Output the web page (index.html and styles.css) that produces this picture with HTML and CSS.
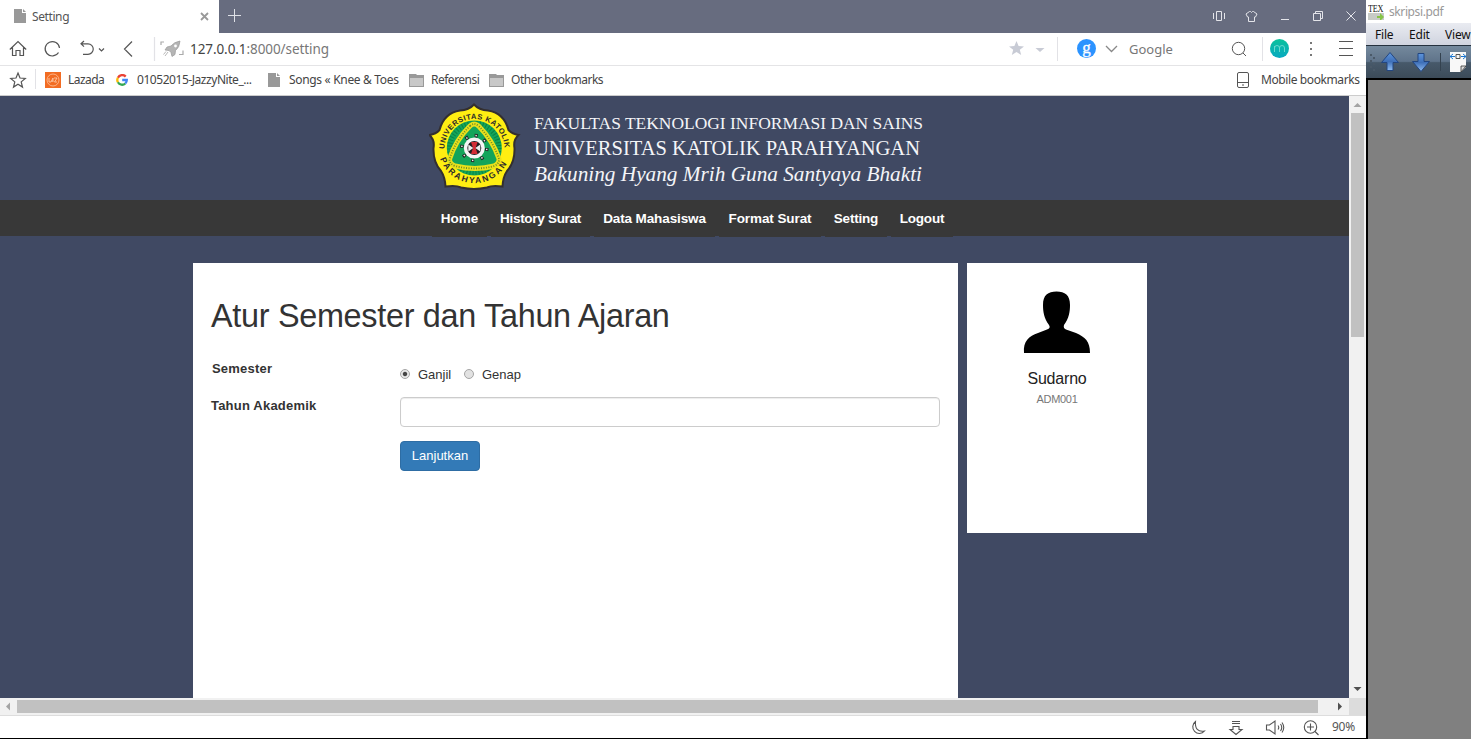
FILE: index.html
```html
<!DOCTYPE html>
<html lang="id">
<head>
<meta charset="utf-8">
<title>Setting</title>
<link rel="stylesheet" href="styles.css">
</head>
<body>
<div class="desktop">
<div class="browser">
  <div class="tabbar">
    <div class="tab">
      <svg class="tab-file" width="12" height="14"><path d="M0 0h8v4h4v10H0z" fill="#999"/><path d="M9 0l3 3H9z" fill="#999"/></svg>
      <span class="tab-title">Setting</span>
      <svg class="tab-close" width="9" height="9"><path d="M1 1l7 7M8 1l-7 7" stroke="#999" stroke-width="1.8"/></svg>
    </div>
    <svg class="plus" width="13" height="13"><path d="M6.5 0v13M0 6.5h13" stroke="#dfe1e7"/></svg>
    <svg class="winicons" width="146" height="16" fill="none" stroke="#e4e5ea">
      <path d="M.5 5v6M11.500 5v6M3.500 3.500h5v9h-5z"/>
      <path d="M36.500 3.500l-3.500 2.500 1.500 3h1v4.500h6v-4.500h1l1.500-3-3.500-2.500h-1q-1 2-2 0z"/>
      <path d="M68 11.500h8"/>
      <path d="M100.500 5.500h7v7h-7zM102.500 5.500v-2h7v7h-2"/>
      <path d="M133.500 3.500l9 9M142.500 3.500l-9 9"/>
    </svg>
  </div>
  <div class="addressbar">
    <svg class="nav-icons" width="186" height="32" fill="none" stroke="#555" stroke-width="1.200">
      <path d="M9.800 16.500l8.200-8 8.200 8M12.500 14.500v8h3.500v-5h4v5h3.500v-8"/>
      <path d="M58.500 19.500a7.200 7.200 0 1 1 1-4.500"/>
      <path d="M84 8l-3 2.800 3 2.800M81 10.800h7a5 5 0 0 1 0 10.500h-5M99 15.500l2.500 2.500 2.500-2.500M132 8.500l-7.500 7.500 7.500 7.500"/>
      <path d="M154.500 4v24" stroke="#e2e2e6"/>
      <path d="M161 12v-3h3M179 21.500h4v-4" stroke="#aaa"/>
      <path d="M180 8q-6 1-9 5l-4 1-2 3 4 .5 2 2 1 4 3-2 .5-4q4-3 4.500-9.500zM168 19l-3 4M166 18.500l-2.500 3" fill="#b5b5b5" stroke="#999" stroke-width=".7"/>
      <circle cx="175.500" cy="13" r="1.400" fill="#fff" stroke="none"/>
    </svg>
    <span class="url"><b>127.0.0.1</b>:8000/setting</span>
    <svg class="search-left" width="120" height="32">
      <path d="M16.500 8l2.100 5 5.400.4-4.200 3.400 1.400 5.200-4.700-2.900-4.700 2.900 1.400-5.200-4.200-3.400 5.400-.4z" fill="#c8cbd5"/>
      <path d="M35.500 15h9l-4.500 4z" fill="#c8cbd5"/><path d="M57.500 4v24" stroke="#e2e2e6"/>
      <circle cx="86.500" cy="15.500" r="9.500" fill="#2b93ff"/>
      <text x="86.500" y="19.500" text-anchor="middle" fill="#fff" font-family="Liberation Serif, serif" font-size="17" stroke="#fff" stroke-width=".3">g</text>
      <path d="M106 13l5.500 5.500 5.500-5.500" fill="none" stroke="#888" stroke-width="1.300"/>
    </svg>
    <span class="engine">Google</span>
    <svg class="search-right" width="136" height="32" fill="none" stroke="#555">
      <circle cx="8.500" cy="15.500" r="6.200"/><path d="M13 20l3 3"/>
      <path d="M32.500 4v24" stroke="#e2e2e6"/>
      <circle cx="49.500" cy="15.500" r="9.500" fill="url(#mg)" stroke="none"/>
      <defs><linearGradient id="mg" x2="0" y2="1"><stop stop-color="#0ac19b"/><stop offset="1" stop-color="#08a9c1"/></linearGradient></defs>
      <path d="M44.500 19v-6M44.500 15q0-2.500 2.500-2.500t2.500 2.500v4M49.500 15q0-2.500 2.500-2.500t2.500 2.500v4" stroke="#68d9ce"/>
      <path d="M80 9h2v2h-2zM80 15h2v2h-2zM80 21h2v2h-2z" fill="#777" stroke="none"/>
      <path d="M109 8.500h14M109 15.500h14M109 22.500h14"/>
    </svg>
  </div>
  <div class="bookmarks">
    <svg class="bm-star" width="38" height="30"><path d="M18 8l2 5 5.300.4-4.100 3.500 1.300 5.200-4.500-2.800-4.500 2.800 1.300-5.200-4.100-3.500 5.300-.4z" fill="none" stroke="#555" stroke-width="1.200"/><path d="M35.500 4v20" stroke="#e2e2e6"/></svg>
    <svg class="ic-lazada" width="16" height="16"><path d="M0 0h16v16H0z" fill="#f26c23"/><circle cx="8" cy="8" r="6" fill="none" stroke="#ffc49d" stroke-width=".8"/><path d="M4 6v4h2l2-4v4M6.500 9H8M9 6h3L9.500 10H12" fill="none" stroke="#ffd3b5" stroke-width=".8"/></svg>
    <span class="bm w-lazada">Lazada</span>
    <svg class="ic-google" width="12" height="12" viewBox="0 0 12 12" fill="none" stroke-width="2.300"><path d="M9.700 2.600A4.800 4.800 0 0 0 1.900 3.700" stroke="#ea4335"/><path d="M1.900 3.700a4.800 4.800 0 0 0 0 4.600" stroke="#fbbc05"/><path d="M1.900 8.300a4.800 4.800 0 0 0 7.400 1.200" stroke="#34a853"/><path d="M9.300 9.500Q10.800 8 10.800 6H6.200" stroke="#4285f4"/></svg>
    <span class="bm w-jazzy">01052015-JazzyNite_...</span>
    <svg class="ic-file" width="12" height="14"><path d="M0 0h8v4h4v10H0z" fill="#999"/><path d="M9 0l3 3H9z" fill="#999"/></svg>
    <span class="bm w-songs">Songs « Knee &amp; Toes</span>
    <svg class="ic-folder" width="15" height="13"><path d="M0 0h7l1 1h7v12H0z" fill="#999"/><path d="M1 4h13v8H1z" fill="#c8c8c8"/></svg>
    <span class="bm w-ref">Referensi</span>
    <svg class="ic-folder" width="15" height="13"><path d="M0 0h7l1 1h7v12H0z" fill="#999"/><path d="M1 4h13v8H1z" fill="#c8c8c8"/></svg>
    <span class="bm w-other">Other bookmarks</span>
    <svg class="ic-phone" width="12" height="16" fill="none" stroke="#555"><rect x=".5" y=".5" width="11" height="15" rx="1.500"/><path d="M.5 10.500h11M5 13h2"/></svg>
    <span class="bm w-mobile">Mobile bookmarks</span>
  </div>
  <div class="viewport">
    <div class="page">
      <header class="banner">
        <svg width="500" height="104" viewBox="429 96 500 104">
          <defs><path id="arcTop" d="M444.500 149a30 30 0 1 1 60 0"/><path id="arcBottom" d="M439.500 157a36.500 36.500 0 0 0 70 0"/></defs>
          <path d="M474 104.500Q479 110 488 110.500Q504 113 508.500 130Q512 134 518.500 135Q513 140 514.500 148Q515 162 507 171Q503 177 502.500 186.500Q492 185 487 187.500Q480 189 474 189Q468 189 461 187.500Q456 185 445.500 186.500Q445 177 441 171Q433 162 433.500 148Q435 140 429.500 135Q436 134 439.500 130Q444 113 460 110.500Q469 110 474 104.500Z" fill="#ffee12" stroke="#332f30" stroke-width="2"/>
          <circle cx="474.300" cy="148" r="27.500" fill="#13a45a"/>
          <circle cx="474.300" cy="148" r="24.500" fill="none" stroke="#0b8244" stroke-width="5" stroke-dasharray="1 2"/>
          <path d="M470 126q4-4 8.600 0 14 14 20.500 33 0 5-5 7-19 5-39 0-6-2-5.500-7 6-19 20.400-33z" fill="#13a45a" stroke="#e9e01b" stroke-width="5"/>
          <path d="M470 126q4-4 8.600 0 14 14 20.500 33 0 5-5 7-19 5-39 0-6-2-5.500-7 6-19 20.400-33z" fill="none" stroke="#6f8b25" stroke-width="1.800" stroke-dasharray="1 1.500"/>
          <circle cx="474.300" cy="148" r="12.500" fill="none" stroke="#222" stroke-width="3.500" stroke-dasharray="3 6.817"/>
          <circle cx="474.300" cy="148" r="12.500" fill="none" stroke="#eee" stroke-width="1.500" stroke-dasharray="1.400 8.417" stroke-dashoffset="-.8"/>
          <circle cx="474.300" cy="148" r="10.500" fill="#f5f5f5"/>
          <circle cx="474.300" cy="148" r="7" fill="#211d20"/>
          <path d="M471 142h6.600l-2 6 2 6H471l2-6z" fill="#d32c35"/><path d="M468.300 144.500l5 3.500-5 3.500zM480.300 144.500l-5 3.500 5 3.500z" fill="#eee"/>
          <text class="seal"><textPath href="#arcTop" textLength="93" lengthAdjust="spacing">UNIVERSITAS KATOLIK</textPath></text>
          <text class="seal seal-low"><textPath href="#arcBottom" startOffset="2" textLength="84" lengthAdjust="spacing">PARAHYANGAN</textPath></text>
          <text class="banner-text" x="534" y="129" font-size="17" textLength="389" lengthAdjust="spacingAndGlyphs">FAKULTAS TEKNOLOGI INFORMASI DAN SAINS</text>
          <text class="banner-text" x="534" y="155" font-size="21" textLength="386" lengthAdjust="spacingAndGlyphs">UNIVERSITAS KATOLIK PARAHYANGAN</text>
          <text class="banner-text motto" x="534" y="181" font-size="22" textLength="388" lengthAdjust="spacingAndGlyphs">Bakuning Hyang Mrih Guna Santyaya Bhakti</text>
        </svg>
      </header>
      <nav class="menu">
        <a class="m-home">Home</a><a class="m-history">History Surat</a><a class="m-data">Data Mahasiswa</a><a class="m-format">Format Surat</a><a class="m-setting">Setting</a><a class="m-logout">Logout</a>
      </nav>
      <main class="columns">
        <section class="panel">
          <h1>Atur Semester dan Tahun Ajaran</h1>
          <div class="row row-radio">
            <span class="label l-sem">Semester</span>
            <div class="radios"><i class="radio on"></i><span class="r-ganjil">Ganjil</span><i class="radio"></i><span class="r-genap">Genap</span></div>
          </div>
          <div class="row row-input">
            <span class="label">Tahun Akademik</span>
            <input class="year" type="text">
          </div>
          <button class="submit">Lanjutkan</button>
        </section>
        <aside class="profile">
          <svg width="68" height="63"><path d="M1 62C0 50 6 45 15 42L24 38.500Q28 37 26 34C21 27 20 21 20 14C20 4 25 .5 33.500.5S47 4 47 14C47 21 46 27 41 34Q40 37 43 38.500L53 42C62 46 67 50 67 62Z" fill="#000"/></svg>
          <div class="name">Sudarno</div>
          <div class="code">ADM001</div>
        </aside>
      </main>
    </div>
    <div class="vscroll">
      <svg width="17" height="17"><path d="M4.500 11l4-4 4 4z" fill="#a3a3a3"/></svg>
      <div class="vthumb"></div>
      <svg class="down" width="17" height="17"><path d="M4.500 6h8l-4 4z" fill="#505050"/></svg>
    </div>
  </div>
  <div class="hscroll">
    <svg width="17" height="17"><path d="M10 4.500v8l-4-4z" fill="#a3a3a3"/></svg>
    <div class="hthumb"></div>
    <svg class="right" width="31" height="17"><path d="M20 4.500v8l4-4z" fill="#505050"/></svg>
    <div class="corner"></div>
  </div>
  <div class="status">
    <svg width="130" height="22" fill="none" stroke="#555" stroke-width="1.100">
      <path d="M6 6a6.600 6.600 0 1 0 9 9.500Q5 17 6 6z" transform="translate(-.5 -.5)"/>
      <path d="M42 5.500h8M42 7.500h8M43 10.500h6v3h3l-6 5-6-5h3z"/>
      <path d="M76.500 9h3l5.500-4v13l-5.500-4h-3zM88 9.500q1.500 2 0 4M90.500 8q2.500 3.500 0 7M92 6.500q3.500 5 0 10"/>
      <circle cx="120.500" cy="11" r="6.200"/><path d="M125 15.500l3.500 3.500M120.500 7.500v7M117 11h7"/>
    </svg>
    <span class="zoom">90%</span>
  </div>
</div>
<div class="pdf">
  <div class="pdf-title">
    <svg width="16" height="17"><path d="M0 10h16v7H0z" fill="#c7cbc7"/><text x="0" y="9" font-family="Liberation Serif, serif" font-size="11" textLength="15" lengthAdjust="spacingAndGlyphs" fill="#222">TEX</text><path d="M9 13h3v-3l4 4-4 4v-3H9z" fill="#86c447"/></svg>
    <span>skripsi.pdf</span>
  </div>
  <div class="pdf-menu"><span class="p-file">File</span><span class="p-edit">Edit</span><span class="p-view">View</span></div>
  <div class="pdf-tools">
    <svg width="105" height="32">
      <defs><linearGradient id="ar" x2="0" y2="1"><stop stop-color="#5e95dc"/><stop offset=".5" stop-color="#3f70b8"/><stop offset="1" stop-color="#8fbcf2"/></linearGradient></defs>
      <path d="M4 8h2v2H4zM4 14h2v2H4zM4 20h2v2H4zM7 11h2v2H7zM7 17h2v2H7zM7 23h2v2H7z" fill="#4a5968"/>
      <path d="M24 6.500l8.500 10H27v8h-6v-8h-5.500z" fill="url(#ar)" stroke="#234680"/>
      <path d="M55 25.500l8.500-10H58v-8h-6v8h-5.500z" fill="url(#ar)" stroke="#234680"/>
      <path d="M74.500 7v18" stroke="#34424f"/>
      <path d="M84 6h16v15l-5 5H84z" fill="#f8f8f8"/><path d="M100 20h-5v6z" fill="#ddd" stroke="#333" stroke-width=".8"/><path d="M90 8.500h4v4h-4z" fill="none" stroke="#555"/><path d="M84 10.500h5M100 10.500h-5M87 8l-3 2.500 3 2.500M97 8l3 2.500-3 2.500" stroke="#1976d2" fill="none"/>
    </svg>
  </div>
  <div class="pdf-body"></div>
</div>
</div>
</body>
</html>
```

FILE: styles.css
```css
* { box-sizing: border-box; }
body { margin: 0; overflow: hidden; background: #000; font-family: "Noto Sans", sans-serif; }
svg { display: block; flex: none; }
span { white-space: nowrap; flex: none; }
.desktop { display: flex; width: 1471px; height: 739px; }
.browser { width: 1366px; height: 738px; display: flex; flex-direction: column; background: #fff; }

.tabbar { height: 33px; flex: none; background: #676c7f; display: flex; align-items: center; }
.tab { width: 219px; height: 33px; background: #fff; display: flex; align-items: center; padding: 0 10px 1px 14px; }
.tab-title { margin-left: 6px; font-size: 12px; letter-spacing: -.4px; color: #555; }
.tab-close { margin-left: auto; }
.plus { margin: -2px 0 0 9px; }
.winicons { margin: -1px 7px 0 auto; }

.addressbar { height: 33px; flex: none; display: flex; align-items: center; border-bottom: 1px solid #e4e4e6; background: #fff; }
.url { width: 816px; padding-left: 4px; font-size: 13.5px; letter-spacing: -.08px; color: #777; }
.url b { font-weight: normal; color: #444; }
.search-left { margin-left: -2px; }
.engine { width: 102px; padding-left: 9px; font-size: 13px; color: #777; }
.search-right { margin-left: 8px; }

.bookmarks { height: 30px; flex: none; display: flex; align-items: center; border-bottom: 1px solid #ccc; padding-bottom: 1px; background: #fff; }
.bm { font-size: 12px; color: #444; margin-top: -1px; }
.ic-lazada { margin: 0 7px; }
.w-lazada { width: 48px; letter-spacing: -.55px; }
.ic-google { margin-right: 9px; }
.w-jazzy { width: 131px; letter-spacing: -.45px; }
.ic-file { margin-right: 9px; }
.w-songs { width: 120px; letter-spacing: -.32px; }
.ic-folder { margin-right: 7px; }
.w-ref { width: 58px; letter-spacing: -.5px; }
.w-other { letter-spacing: -.48px; }
.ic-phone { margin-left: auto; }
.w-mobile { margin-left: 12px; width: 105px; letter-spacing: -.4px; }

.viewport { height: 602px; flex: none; display: flex; font-family: "Liberation Sans", Arial, sans-serif; }
.page { width: 1349px; background: #404963; overflow: hidden; }
.banner { height: 104px; padding-left: 429px; }
.seal { font: bold 7.5px "Liberation Sans", sans-serif; fill: #2b292a; }
.seal-low { font-size: 8.5px; }
.banner-text { font-family: "Liberation Serif", serif; fill: #f4f5f8; }
.motto { font-style: italic; }
.menu { height: 36px; padding-left: 432px; background: #383838; display: flex; gap: 4px; }
.menu a { height: 37px; background: #383838; color: #fff; font-size: 13.5px; font-weight: bold; line-height: 37px; text-align: center; white-space: nowrap; }
.m-home { width: 55px; }
.menu .m-history { width: 99px; letter-spacing: -.3px; }
.menu .m-data { width: 121px; letter-spacing: -.12px; }
.menu .m-format { width: 102px; letter-spacing: -.08px; }
.menu .m-setting { width: 62px; letter-spacing: -.2px; }
.menu .m-logout { width: 62px; letter-spacing: -.2px; }

.columns { display: flex; gap: 9px; padding: 27px 0 0 193px; align-items: flex-start; color: #333; }
.panel { width: 765px; height: 435px; background: #fff; padding: 35px 18px 0; }
h1 { margin: 0; height: 60px; font-size: 32.4px; line-height: 36px; font-weight: normal; letter-spacing: -.3px; white-space: nowrap; }
.row { display: flex; font-size: 13px; }
.row-radio { height: 39px; }
.row-input { height: 44px; }
.label { width: 189px; font-weight: bold; line-height: 17px; padding-top: 2px; letter-spacing: .2px; }
.row-input .label { padding-top: 0; }
.l-sem { padding-left: 1px; }
.radios { display: flex; height: 18px; margin-top: 7px; align-items: center; }
.radio { width: 10px; height: 10px; border: 1px solid #a5a5a5; border-radius: 50%; background: #e2e2e2; flex: none; }
.on { background: radial-gradient(circle, #444 0 1.7px, #e8e8e8 2.7px); }
.r-ganjil { width: 46px; margin-left: 8px; }
.r-genap { margin-left: 8px; }
.year { width: 540px; height: 30px; border: 1px solid #ccc; border-radius: 4px; background: #fff; box-shadow: inset 0 1px 1px rgba(0,0,0,.075); }
.submit { display: block; margin: 0 0 0 189px; width: 80px; height: 30px; padding: 0 0 2px; border: 1px solid #2e6da4; border-radius: 4px; background: #337ab7; color: #fff; font: 13px "Liberation Sans", sans-serif; }
.profile { width: 180px; height: 270px; background: #fff; display: flex; flex-direction: column; align-items: center; padding-top: 28px; }
.name { font-size: 16px; line-height: 20px; margin-top: 15px; letter-spacing: -.2px; color: #222; }
.code { font-size: 11px; line-height: 14px; margin-top: 3px; letter-spacing: -.3px; color: #777; }

.vscroll { width: 17px; background: #f1f1f1; display: flex; flex-direction: column; }
.vthumb { width: 13px; height: 224px; margin-left: 2px; background: #c1c1c1; }
.down { margin-top: auto; }
.hscroll { height: 18px; flex: none; display: flex; background: #f1f1f1; border-bottom: 1px solid #ddd; }
.hthumb { width: 1301px; height: 13px; margin-top: 2px; background: #c1c1c1; }
.corner { width: 17px; background: #dcdcdc; }
.status { height: 22px; flex: none; display: flex; justify-content: flex-end; align-items: center; background: #fff; }
.zoom { width: 46px; padding-left: 12px; margin-top: -2px; font-size: 12px; letter-spacing: -.3px; color: #555; }

.pdf { width: 105px; height: 739px; display: flex; flex-direction: column; overflow: hidden; background: #000; }
.pdf-title { height: 23px; flex: none; display: flex; align-items: center; padding: 0 0 1px 2px; background: #fff; font-size: 12px; letter-spacing: -.4px; color: #999; }
.pdf-title span { margin-left: 5px; }
.pdf-menu { height: 22px; flex: none; display: flex; background: linear-gradient(#e9ebf1, #d0d4df); padding-left: 9px; font-size: 12px; letter-spacing: -.2px; line-height: 23px; color: #111; }
.p-file { width: 34px; }
.p-edit { width: 36px; }
.pdf-tools { height: 33px; flex: none; background: linear-gradient(#74899d 0, #60748a 48%, #47596a 52%, #3c4b59 100%); border-top: 1px solid #25313e; }
.pdf-body { flex: 1; margin: 2px 0 0 2px; background: #808080; }
```
